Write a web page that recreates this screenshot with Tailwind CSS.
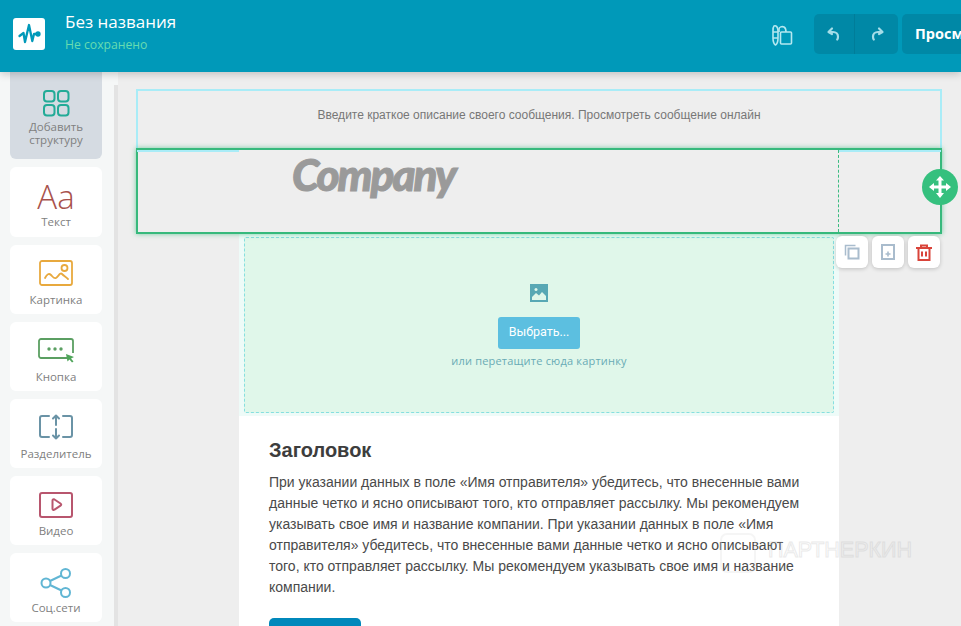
<!DOCTYPE html>
<html lang="ru">
<head>
  <meta charset="UTF-8" />
  <title>Редактор</title>
  <script src="https://cdn.jsdelivr.net/npm/@tailwindcss/browser@4"></script>
</head>
<body class="relative w-[961px] h-[626px] overflow-hidden bg-[#eeeeee] font-['Liberation_Sans',sans-serif]">

  <!-- header -->
  <header class="relative z-20 h-[72px] bg-[#0099b9] flex items-center pl-[13px] shadow-[0_2px_8px_rgba(0,0,0,0.2)] font-['Open_Sans',sans-serif]">
    <div class="w-8 h-8 -mt-1 bg-white rounded-[3px] flex items-center justify-center">
      <svg width="32" height="32" viewBox="0 0 32 32" fill="none" stroke="#0099b9" stroke-width="2.300" stroke-linecap="round" stroke-linejoin="round"><path d="M6.500 18l4-3 1.500 9 4-17 3.300 16 1.700-7h4"/><circle cx="25" cy="16" r="1.500" fill="#0099b9"/></svg>
    </div>
    <div class="ml-5 -mt-[7px]">
      <div class="text-[17px] leading-[22px] text-white">Без названия</div>
      <div class="text-[12.200px] leading-[18px] mt-[3px] text-[#67dcb0]">Не сохранено</div>
    </div>
    <div class="ml-auto -mt-1 flex items-center">
      <svg class="mr-[20px] mt-[2px]" width="24" height="24" viewBox="0 0 24 24" fill="none" stroke="#b5e8f0" stroke-width="1.600" stroke-linejoin="round"><path d="M4 3c2-1 4 1 4 5v7c0 3-1 6-2.500 7C4 21 3 18 3 15V8c0-2 0-4 1-5z"/><path d="M3 9h5M3 15h5"/><path d="M9 9V6c0-2 3-3 5-2s2 3 2 5"/><rect x="10.500" y="9" width="11" height="12" rx="1"/></svg>
      <div class="flex h-10 w-[84px] rounded-[5px] bg-[#0088a6]">
        <div class="w-[41px] flex items-center justify-center border-r border-[#007d99]">
          <svg width="16" height="16" viewBox="0 0 16 16" fill="none" stroke="#a5dde8" stroke-width="2.200" stroke-linecap="round" stroke-linejoin="round"><path d="M6 2.500 2.500 6 6 8"/><path d="M3 6h4c3 0 5 2 5 4.500 0 1.500-.3 2.500-.8 3"/></svg>
        </div>
        <div class="flex-1 flex items-center justify-center">
          <svg width="16" height="16" viewBox="0 0 16 16" fill="none" stroke="#a5dde8" stroke-width="2.200" stroke-linecap="round" stroke-linejoin="round"><path d="M10 2.500 13.500 6 10 8"/><path d="M13 6H9c-3 0-5 2-5 4.500 0 1.500.3 2.500.8 3"/></svg>
        </div>
      </div>
      <div class="ml-1 w-[59px] h-10 rounded-l-[5px] bg-[#0088a6] pl-[13px] flex items-center overflow-hidden text-white font-bold text-[14.500px] whitespace-nowrap">Просмотр</div>
    </div>
  </header>

  <div class="flex h-[554px]">
    <!-- sidebar -->
    <aside class="relative w-[118px] shrink-0 bg-[#f5f7f7] px-[10px] flex flex-col gap-2 font-['Open_Sans',sans-serif] text-[11.500px] text-[#808080] text-center leading-[13px]">
      <div class="h-[87px] w-[92px] shrink-0 bg-[#d5dbe2] rounded-b-[6px] flex flex-col items-center pt-[17px]">
        <svg width="28" height="28" viewBox="0 0 28 28" fill="none" stroke="#23ab97" stroke-width="2"><rect x="2" y="2" width="10.500" height="10.500" rx="3"/><rect x="16" y="2" width="10.500" height="10.500" rx="3"/><rect x="2" y="16" width="10.500" height="10.500" rx="3"/><rect x="16" y="16" width="10.500" height="10.500" rx="3"/></svg>
        <div class="mt-[3px]">Добавить<br>структуру</div>
      </div>

      <div class="h-[70px] w-[92px] shrink-0 bg-white rounded-[6px] flex flex-col items-center pt-[16px]">
        <div class="h-[28px] leading-[28px] text-[33px] text-[#a8524c] font-['Open_Sans',sans-serif] font-light">Aa</div>
        <div class="mt-[4px]">Текст</div>
      </div>

      <div class="h-[69px] w-[92px] shrink-0 bg-white rounded-[6px] flex flex-col items-center pt-[15px]">
        <svg width="34" height="26" viewBox="0 0 34 26" fill="none" stroke="#e8a93e" stroke-width="1.800" stroke-linejoin="round" stroke-linecap="round"><rect x="1" y="1" width="32" height="24" rx="2"/><circle cx="25.500" cy="8" r="3"/><path d="M6 18c2-4 4-5 6-3s3 4 5 3 4-6 6-4 4 3 6 5"/></svg>
        <div class="mt-[7px]">Картинка</div>
      </div>

      <div class="h-[69px] w-[92px] shrink-0 bg-white rounded-[6px] flex flex-col items-center pt-[15px]">
        <svg width="38" height="26" viewBox="0 0 38 26" fill="none"><path d="M30 21H4a2 2 0 0 1-2-2V4a2 2 0 0 1 2-2h30a2 2 0 0 1 2 2v12" stroke="#5b9f62" stroke-width="1.800"/><circle cx="12" cy="12" r="1.700" fill="#5b9f62"/><circle cx="18" cy="12" r="1.700" fill="#5b9f62"/><circle cx="24" cy="12" r="1.700" fill="#5b9f62"/><path d="M29 17l8 3-3 1.500 2.500 3-1.500 1-2.500-3-2 2z" fill="#4fa55a"/></svg>
        <div class="mt-[7px]">Кнопка</div>
      </div>

      <div class="h-[69px] w-[92px] shrink-0 bg-white rounded-[6px] flex flex-col items-center pt-[15px]">
        <svg width="36" height="26" viewBox="0 0 36 26" fill="none" stroke="#6a93a6" stroke-width="2" stroke-linejoin="round" stroke-linecap="round"><path d="M11 2H4a2 2 0 0 0-2 2v17a2 2 0 0 0 2 2h7M25 2h7a2 2 0 0 1 2 2v17a2 2 0 0 1-2 2h-7"/><path d="M18 11V1.500M15 4.500l3-3 3 3M18 15v9.500M15 21.500l3 3 3-3"/></svg>
        <div class="mt-[7px]">Разделитель</div>
      </div>

      <div class="h-[69px] w-[92px] shrink-0 bg-white rounded-[6px] flex flex-col items-center pt-[16px]">
        <svg width="34" height="26" viewBox="0 0 34 26" fill="none" stroke="#b8566e" stroke-width="2" stroke-linejoin="round"><rect x="1" y="1" width="32" height="24" rx="2"/><path d="M13.500 8.500c0-1 1-1.500 2-1l6 4c1 .7 1 1.500 0 2.200l-6 4c-1 .5-2 0-2-1z"/></svg>
        <div class="mt-[6px]">Видео</div>
      </div>

      <div class="h-[69px] w-[92px] shrink-0 bg-white rounded-[6px] flex flex-col items-center pt-[15px]">
        <svg width="32" height="30" viewBox="0 0 32 30" fill="none" stroke="#61b6d4" stroke-width="2"><circle cx="6" cy="15" r="4.500"/><circle cx="25.500" cy="5.500" r="4.500"/><circle cx="25.500" cy="24.500" r="4.500"/><path d="M10 13l11.500-5.500M10 17l11.500 5.500"/></svg>
        <div class="mt-[3px]">Соц.сети</div>
      </div>

      <div class="absolute left-[114px] top-[13px] bottom-0 w-1 bg-[#e3e3e3]"></div>
    </aside>

    <!-- canvas -->
    <main class="flex-1 min-w-0 pt-[17px] relative">
      <!-- preheader row -->
      <div class="ml-[18px] w-[806px] h-[59px] border-2 border-b-0 border-[#a9ecf7] flex justify-center pt-[17px] text-[12px] leading-[14px] text-[#777777] font-['Liberation_Sans',sans-serif]">
        Введите краткое описание своего сообщения. Просмотреть сообщение онлайн
      </div>

      <!-- logo row -->
      <div class="h-[86px] ml-[18px] w-[806px]">
        <div class="w-[600px] mx-auto h-full pl-[53px] overflow-hidden">
          <span class="block -mt-[2px] text-[44px] leading-[56px] font-black italic text-[#9a9a9a] font-['Lato',sans-serif] tracking-[-2px] [-webkit-text-stroke:1px_#9a9a9a]">Company</span>
        </div>
      </div>

      <!-- email column -->
      <div class="w-[600px] ml-[121px] bg-white">
        <div class="bg-[#eefbf8] px-[5px] pt-[3px] pb-[3px]">
          <div class="h-[176px] border border-dashed border-[#86dfe0] rounded-[2px] bg-[#e0f7ea] flex flex-col items-center pt-[46px]">
            <svg width="18" height="18" viewBox="0 0 18 18"><rect x="1" y="1" width="16" height="16" fill="none" stroke="#58a8b4" stroke-width="2"/><path d="M2 13l4-4 3 2.500 3-3.500 4 4V2H2z" fill="#58a8b4"/><circle cx="6" cy="5.500" r="1.500" fill="#e0f7ea"/></svg>
            <div class="mt-[15px] w-[82px] h-8 rounded-[3px] bg-[#5cbfe0] text-white text-[12.500px] leading-[30px] text-center font-['Roboto',sans-serif]">Выбрать...</div>
            <div class="mt-[5px] text-[11px] leading-[14px] tracking-[0.2px] text-[#69abb5] font-['Open_Sans',sans-serif]">или перетащите сюда картинку</div>
          </div>
        </div>

        <div class="px-[30px] pt-[22px]">
          <h1 class="text-[20px] leading-[24px] font-bold text-[#3d3d3d]">Заголовок</h1>
          <p class="mt-[10px] w-[540px] text-[14px] leading-[21px] text-[#4a4a4a]">При указании данных в поле «Имя отправителя» убедитесь, что внесенные вами данные четко и ясно описывают того, кто отправляет рассылку. Мы рекомендуем указывать свое имя и название компании. При указании данных в поле «Имя отправителя» убедитесь, что внесенные вами данные четко и ясно описывают того, кто отправляет рассылку. Мы рекомендуем указывать свое имя и название компании.</p>
          <div class="mt-5 w-[92px] h-10 rounded-[5px] bg-[#0088bb]"></div>
        </div>
      </div>

      <!-- selected row frame -->
      <div class="absolute left-[18px] top-[76px] w-[806px] h-[86px] border-2 border-[#36b97c] shadow-[0_0_5px_rgba(61,187,128,0.7)]">
        <div class="absolute left-[700px] top-0 bottom-0 border-l border-dashed border-[#3dbb80]"></div>
      </div>
      <div class="absolute left-[19px] top-[78px] w-[102px] h-[2px] bg-[#a9ecf7]"></div>
      <div class="absolute left-[721px] top-[78px] w-[102px] h-[2px] bg-[#a9ecf7]"></div>

      <!-- row controls -->
      <div class="absolute left-[804px] top-[97px] w-9 h-9 rounded-full bg-[#35c07e] flex items-center justify-center">
        <svg width="22" height="22" viewBox="0 0 22 22" fill="#ffffff"><path d="M11 0l4 4.500h-2.500V9.500H17V7l5 4-5 4v-2.500h-4.500V17H15l-4 5-4-5h2.500v-4.500H5V15l-5-4 5-4v2.500h4.500V4.500H7z"/></svg>
      </div>
      <div class="absolute left-[718px] top-[164px] flex gap-1">
        <div class="w-8 h-8 rounded-[6px] bg-white shadow-[0_1px_4px_rgba(0,0,0,0.2)] flex items-center justify-center">
          <svg width="16" height="16" viewBox="0 0 16 16" fill="none" stroke="#a9bccd" stroke-width="2"><path d="M1.500 11.500V1.500h10" stroke-width="1.500"/><rect x="4.500" y="4.500" width="10" height="10"/></svg>
        </div>
        <div class="w-8 h-8 rounded-[6px] bg-white shadow-[0_1px_4px_rgba(0,0,0,0.2)] flex items-center justify-center">
          <svg width="14" height="16" viewBox="0 0 14 16"><rect x="1" y="1" width="12" height="14" fill="none" stroke="#a9bccd" stroke-width="2"/><path d="M7 7.500v5M4.500 10h5" stroke="#a9bccd" stroke-width="1.600"/></svg>
        </div>
        <div class="w-8 h-8 rounded-[6px] bg-white shadow-[0_1px_4px_rgba(0,0,0,0.2)] flex items-center justify-center">
          <svg width="16" height="17" viewBox="0 0 16 17" fill="none" stroke="#d9443a" stroke-width="2"><path d="M0 4h16M5 4V1.500h6V4"/><rect x="2.500" y="4" width="11" height="12"/><path d="M6 7.500v5M10 7.500v5"/></svg>
        </div>
      </div>

      <!-- watermark -->
      <div class="absolute left-[602px] top-[461px] flex items-center opacity-30 pointer-events-none">
        <div class="w-9 h-10 rounded-[7px] border-2 border-[#dddddd]"></div>
        <span class="ml-3 -mt-[7px] text-[21.500px] leading-6 text-transparent font-['Liberation_Sans',sans-serif] [-webkit-text-stroke:1px_#bbbbbb]">ПАРТНЕРКИН</span>
      </div>
    </main>
  </div>

</body>
</html>
